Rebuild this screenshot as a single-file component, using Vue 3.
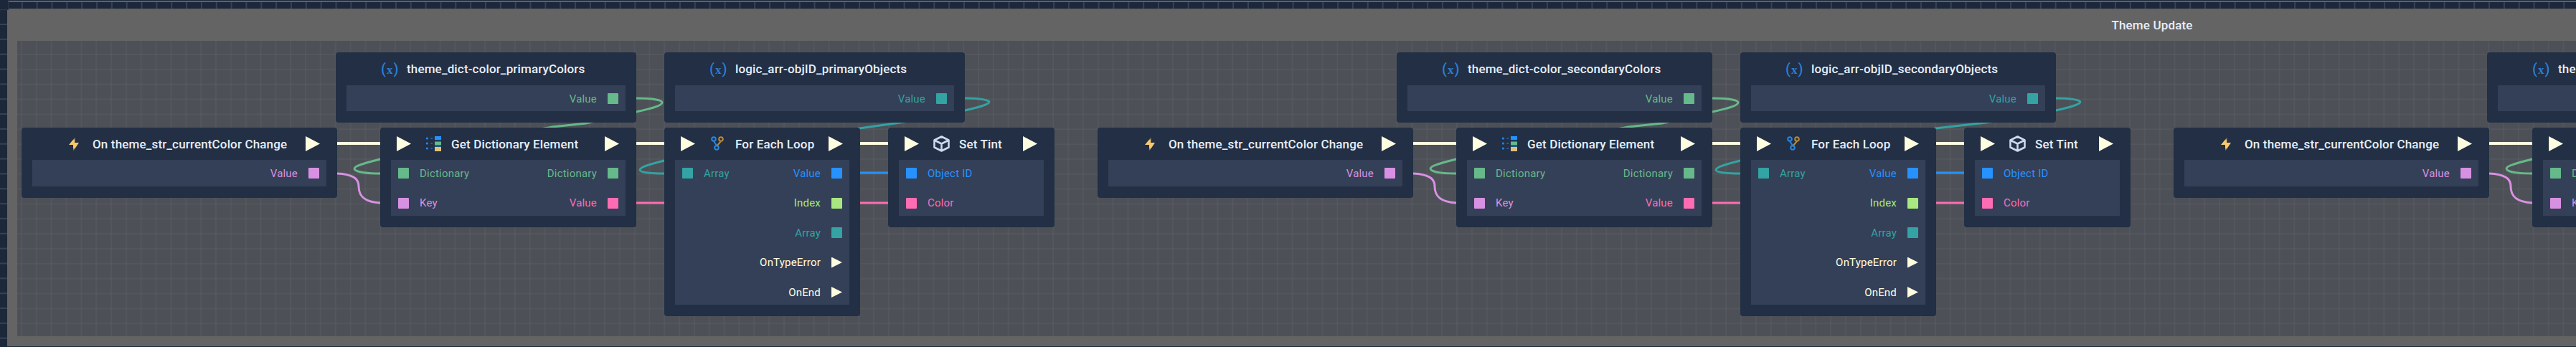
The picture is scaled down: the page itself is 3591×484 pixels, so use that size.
<template>
  <div class="editor">
    <div class="ruler-top"></div>
    <div class="ruler-corner"></div>
    <div class="workspace">
      <div class="ruler-left"></div>
      <section class="group">
        <h2 class="group-title">Theme Update</h2>
        <div class="group-body"></div>
      </section>
    </div>

    <svg class="wires" width="3591" height="484" fill="none">
      <path
        v-for="(w, i) in wires"
        :key="i"
        :d="w.d"
        :stroke="w.color"
        :stroke-width="w.width"
      />
    </svg>

    <div
      v-for="node in nodes"
      :key="node.id"
      class="node"
      :class="node.kind"
      :style="{ left: node.x + 'px', top: node.y + 'px', width: node.w + 'px' }"
    >
      <div class="node-head">
        <span v-if="node.execIn" class="exec"></span>
        <span class="node-icon" :style="iconStyle(node)">
          <svg v-if="node.icon === 'bolt'" width="15" height="20" viewBox="0 0 15 20">
            <defs>
              <linearGradient :id="'bolt-' + node.id" x1="0" y1="0" x2="0" y2="1">
                <stop offset="0.08" stop-color="#4b5360" />
                <stop offset="0.25" stop-color="#f9c968" />
                <stop offset="0.75" stop-color="#f9c968" />
                <stop offset="0.94" stop-color="#4b5360" />
              </linearGradient>
            </defs>
            <polygon points="9,0 0,11 6,11 6,20 14,8 8,8" :fill="'url(#bolt-' + node.id + ')'" />
          </svg>
          <span v-else-if="node.icon === 'var'" class="var-icon">(<i>x</i>)</span>
          <svg v-else-if="node.icon === 'dict'" width="21" height="22" viewBox="0 0 21 22">
            <rect x="12" y="0" width="9" height="5" fill="#2692ff" />
            <rect x="12" y="5" width="9" height="2.5" fill="#1d3c5c" />
            <rect x="12" y="7.5" width="9" height="5" fill="#66b98a" />
            <rect x="12" y="12.5" width="9" height="2.5" fill="#1f5a80" />
            <rect x="12" y="15" width="9" height="6" fill="#e0c080" />
            <g stroke="#2692ff" stroke-width="1.2">
              <circle cx="1.5" cy="3" r="1" />
              <circle cx="1.5" cy="10" r="1" />
              <circle cx="1.5" cy="17" r="1" />
              <path d="M6.5 3H9M6.5 10H9M6.5 17H9" />
            </g>
          </svg>
          <svg v-else-if="node.icon === 'loop'" width="18" height="21" viewBox="0 0 18 21" fill="none" stroke-width="2">
            <path d="M14 7L8 14" stroke="#b98a3a" />
            <circle cx="14" cy="4" r="2.8" stroke="#b98a3a" />
            <path d="M4 7L8 13" stroke="#2a86e0" />
            <circle cx="4" cy="4" r="2.8" stroke="#2a86e0" />
            <circle cx="8" cy="16" r="2.8" stroke="#2a86e0" />
          </svg>
          <svg v-else-if="node.icon === 'cube'" width="23" height="23" viewBox="0 0 23 23" fill="none" stroke="#cbd9ee" stroke-width="2.6" stroke-linejoin="round">
            <path d="M11.5 1.5L21.5 6.5V16.5L11.5 21.5L1.5 16.5V6.5ZM1.5 6.5L11.5 11.5L21.5 6.5M11.5 11.5V21.5" />
          </svg>
        </span>
        <span class="node-title">{{ node.title }}</span>
        <span v-if="node.execOut" class="exec exec-out"></span>
      </div>

      <div class="node-panel">
        <div v-for="(row, i) in node.rows" :key="i" class="port-row">
          <span v-if="row.in" class="port-side" :style="{ color: row.in.color }">
            <span class="port" :style="{ background: row.in.color }"></span>
            {{ row.in.label }}
          </span>
          <span v-if="row.out" class="port-side port-out" :style="{ color: row.out.color }">
            {{ row.out.label }}
            <span v-if="row.out.exec" class="exec exec-small"></span>
            <span v-else class="port" :style="{ background: row.out.color }"></span>
          </span>
        </div>
      </div>
    </div>
  </div>
</template>

<script setup>
const GREEN = '#66b98a'
const LILAC = '#d891e2'
const PINK = '#ff6cb3'
const TEAL = '#33a3a3'
const BLUE = '#2692ff'
const LIME = '#a9e880'
const EXEC = '#fffde0'

const variableRow = (color) => [{ out: { label: 'Value', color } }]

const onChange = (id, x) => ({
  id,
  x,
  y: 178,
  w: 440,
  kind: 'event',
  icon: 'bolt',
  iconX: 66,
  textX: 99,
  title: 'On theme_str_currentColor Change',
  execOut: true,
  rows: variableRow(LILAC)
})

const variable = (id, x, w, title, color) => ({
  id,
  x,
  y: 73,
  w,
  kind: 'variable',
  icon: 'var',
  iconX: 63,
  textX: 99,
  title,
  rows: variableRow(color)
})

const getDict = (id, x) => ({
  id,
  x,
  y: 178,
  w: 357,
  execIn: true,
  execOut: true,
  icon: 'dict',
  iconX: 64,
  textX: 99,
  title: 'Get Dictionary Element',
  rows: [
    { in: { label: 'Dictionary', color: GREEN }, out: { label: 'Dictionary', color: GREEN } },
    { in: { label: 'Key', color: LILAC }, out: { label: 'Value', color: PINK } }
  ]
})

const forEach = (id, x) => ({
  id,
  x,
  y: 178,
  w: 273,
  execIn: true,
  execOut: true,
  icon: 'loop',
  iconX: 65,
  textX: 99,
  title: 'For Each Loop',
  rows: [
    { in: { label: 'Array', color: TEAL }, out: { label: 'Value', color: BLUE } },
    { out: { label: 'Index', color: LIME } },
    { out: { label: 'Array', color: TEAL } },
    { out: { label: 'OnTypeError', color: EXEC, exec: true } },
    { out: { label: 'OnEnd', color: EXEC, exec: true } }
  ]
})

const setTint = (id, x) => ({
  id,
  x,
  y: 178,
  w: 232,
  execIn: true,
  execOut: true,
  icon: 'cube',
  iconX: 63,
  textX: 99,
  title: 'Set Tint',
  rows: [
    { in: { label: 'Object ID', color: BLUE } },
    { in: { label: 'Color', color: PINK } }
  ]
})

const nodes = [
  variable('v1', 468, 419, 'theme_dict-color_primaryColors', GREEN),
  variable('l1', 926, 419, 'logic_arr-objID_primaryObjects', TEAL),
  onChange('e1', 30),
  getDict('g1', 530),
  forEach('f1', 926),
  setTint('t1', 1238),
  variable('v2', 1947, 440, 'theme_dict-color_secondaryColors', GREEN),
  variable('l2', 2426, 440, 'logic_arr-objID_secondaryObjects', TEAL),
  onChange('e2', 1530),
  getDict('g2', 2030),
  forEach('f2', 2426),
  setTint('t2', 2738),
  variable('v3', 3467, 440, 'theme_dict-color_tertiaryColors', GREEN),
  onChange('e3', 3030),
  getDict('g3', 3530)
]

const iconStyle = (node) => ({
  marginLeft: node.iconX - (node.execIn ? 43 : 23) + 'px',
  width: node.textX - node.iconX + 'px'
})

// the wires run behind the nodes, only the bits in the gaps show
const wires = []
const addWire = (d, color, width = 3) => wires.push({ d, color, width })

const addLinks = (o) => {
  addWire(`M${470 + o} 200H${530 + o}`, EXEC, 4)
  addWire(`M${470 + o} 242C${490 + o} 243 ${500 + o} 248 ${500 + o} 260C${500 + o} 275 ${510 + o} 282 ${530 + o} 283`, LILAC)
  addWire(
    `M${887 + o} 137C${905 + o} 137 ${923 + o} 139 ${923 + o} 143C${923 + o} 148 ${905 + o} 152 ${887 + o} 156` +
    `L${817 + o} 172L${770 + o} 177L${530 + o} 222` +
    `C${510 + o} 227 ${494 + o} 231 ${494 + o} 235C${494 + o} 240 ${512 + o} 242 ${530 + o} 242`,
    GREEN
  )
}

const addLoopLinks = (o, tx, gx) => {
  addWire(`M${887 + o} 200H${1238 + o}`, EXEC, 4)
  addWire(`M${887 + o} 283H${1238 + o}`, PINK)
  addWire(`M${1199 + o} 241H${1238 + o}`, BLUE)
  addWire(
    `M${tx} 137C${tx + 17} 137 ${tx + 34} 139 ${tx + 34} 142C${tx + 34} 146 ${tx + 17} 150 ${tx} 154` +
    `L${gx} 171L${1198 + o} 179L${926 + o} 224` +
    `C${906 + o} 229 ${892 + o} 233 ${892 + o} 237C${892 + o} 241 ${910 + o} 242 ${926 + o} 242`,
    TEAL
  )
}

addLinks(0)
addLinks(1500)
addLinks(3000)
addLoopLinks(0, 1345, 1255)
addLoopLinks(1500, 2866, 2769)
</script>

<style scoped>
.editor {
  position: relative;
  width: 3591px;
  height: 484px;
  overflow: hidden;
  background: #1c2839;
  font-family: Roboto, "Liberation Sans", sans-serif;
}

.ruler-top {
  height: 12px;
  box-sizing: border-box;
  border-top: 1px solid #1c2839;
  background:
    linear-gradient(#59627a, #59627a) 0 0 / 100% 2px no-repeat,
    linear-gradient(90deg, #344156 2px, transparent 2px) 9px 0 / 20.85px 100%;
}

.ruler-corner {
  position: absolute;
  left: 0;
  top: 0;
  width: 11px;
  height: 13px;
  background: #1c2839;
  border-right: 1px solid #2c384c;
  border-bottom: 1px solid #2c384c;
}

.workspace {
  display: flex;
  height: 471px;
}

.ruler-left {
  width: 10px;
  flex: none;
  background: linear-gradient(#344156 2px, transparent 2px) 0 21px / 100% 20.85px;
}

.group {
  flex: none;
  width: 5980px;
  box-sizing: border-box;
  padding: 0 14px 14px;
  background: #646464;
  display: flex;
  flex-direction: column;
}

.group-title {
  height: 45px;
  margin: 0;
  display: flex;
  align-items: center;
  justify-content: center;
  color: #e8eef8;
  font-size: 17px;
  font-weight: 500;
  letter-spacing: 0.15px;
}

.group-body {
  flex: 1;
  background-color: #4d5157;
  background-image:
    linear-gradient(90deg, rgba(255, 255, 255, 0.03) 2px, transparent 2px),
    linear-gradient(rgba(255, 255, 255, 0.03) 2px, transparent 2px);
  background-size: 20.85px 100%, 100% 20.85px;
  background-position: 5px 0, 0 18px;
}

.wires {
  position: absolute;
  left: 0;
  top: 0;
}

.node {
  position: absolute;
  box-sizing: border-box;
  padding: 0 15px 16px;
  background: #222f44;
  border-radius: 4px;
}

.node-head {
  height: 45px;
  margin: 0 -15px;
  padding: 0 24px 0 23px;
  display: flex;
  align-items: center;
  color: #e8eef8;
}

.variable .node-head {
  height: 46px;
}

.exec {
  flex: none;
  width: 20px;
  height: 21px;
  background: #fffde0;
  clip-path: polygon(0 0, 100% 50%, 0 100%);
}

.exec-out {
  margin-left: auto;
}

.exec-small {
  width: 15px;
  height: 15px;
}

.node-icon {
  flex: none;
  display: flex;
  align-items: center;
}

.var-icon {
  color: #2a7fd8;
  font-size: 20px;
  font-weight: 500;
  letter-spacing: 1px;
  line-height: 1;
}

.var-icon i {
  font-family: "Liberation Serif", serif;
  font-style: normal;
  font-weight: 700;
  font-size: 17px;
}

.node-title {
  flex: none;
  font-size: 17px;
  font-weight: 500;
  letter-spacing: 0.15px;
  white-space: nowrap;
}

.node-panel {
  padding: 11px 10px 10px;
  background: #344057;
  display: flex;
  flex-direction: column;
  gap: 26.5px;
}

.event .node-panel {
  padding-bottom: 11px;
}

.port-row {
  height: 15px;
  display: flex;
  align-items: center;
}

.port-side {
  display: flex;
  align-items: center;
  gap: 15px;
  font-size: 15px;
  letter-spacing: 0.2px;
  white-space: nowrap;
}

.port-out {
  margin-left: auto;
}

.port {
  flex: none;
  width: 15px;
  height: 15px;
  border-radius: 1px;
}
</style>

<style>
html,
body {
  margin: 0;
  overflow: hidden;
  background: #1c2839;
}
</style>
